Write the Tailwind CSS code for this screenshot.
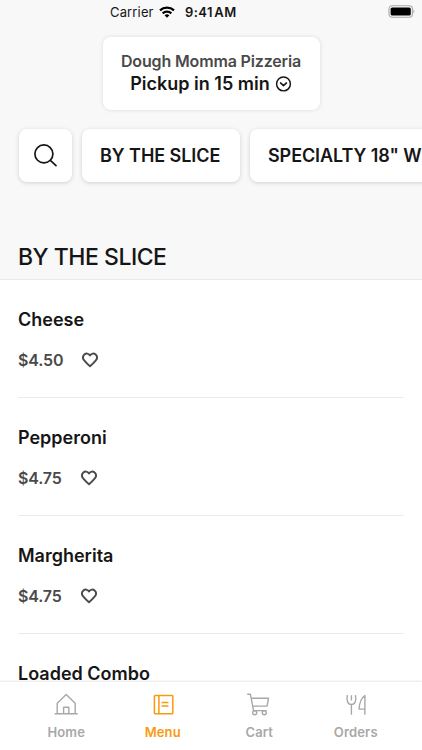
<!DOCTYPE html>
<html lang="en">
<head>
<meta charset="utf-8">
<title>Dough Momma Pizzeria</title>
<script src="https://cdn.jsdelivr.net/npm/@tailwindcss/browser@4"></script>
</head>
<body class="h-[750px] w-[422px] overflow-hidden bg-white font-['Inter',sans-serif] text-[#161616]">
<div class="flex h-[750px] flex-col overflow-hidden">
  <header class="flex h-[280px] shrink-0 flex-col border-b border-[#ebebeb] bg-[#f8f8f8]">
    <div class="flex h-[23px] items-center pr-[7px] pl-[110px] text-[13px] leading-4">
      <span class="w-[44px] whitespace-nowrap tracking-[0.15px]">Carrier</span>
      <svg class="ml-[5px] h-[12px] w-[16px]" viewBox="0 0 16 12" fill="none" stroke="#000" stroke-width="2.3"><path d="M1 4.400a10.300 10.300 0 0 1 14 0M3.700 7.300a6.300 6.300 0 0 1 8.600 0"/><path d="M8 11.700 5.600 9.300a3.500 3.500 0 0 1 4.800 0Z" fill="#000" stroke="none"/></svg>
      <span class="ml-[10px] whitespace-nowrap font-semibold tracking-[0.45px] [word-spacing:-2.5px]">9:41 AM</span>
      <svg class="ml-auto h-[13px] w-[27px]" viewBox="0 0 27 13"><rect x="1" y=".8" width="23.4" height="11.4" rx="3.2" fill="none" stroke="#a8a8a8" stroke-width="1.1"/><rect x="2.6" y="2.4" width="20.2" height="8.2" rx="1.6"/><path d="M25.4 4.6c1.5.6 1.5 3.2 0 3.8Z" fill="#b5b5b5"/></svg>
    </div>
    <div class="mx-auto mt-[14px] flex h-[73px] w-[217px] flex-col items-center rounded-[8px] bg-white pt-[13px] shadow-[0_0_4px_rgba(0,0,0,0.12)]">
      <div class="text-[16px] leading-[22px] font-semibold tracking-[-0.15px] whitespace-nowrap text-[#4a4a4a]">Dough Momma Pizzeria</div>
      <div class="mt-px flex items-center gap-[5px] text-[18px] leading-[22px] font-semibold whitespace-nowrap">
        <span>Pickup in 15 min</span>
        <svg class="h-[17px] w-[17px]" viewBox="0 0 16 16" fill="none" stroke="#161616" stroke-width="1.4" stroke-linecap="round" stroke-linejoin="round"><circle cx="8" cy="7.5" r="6.5"/><path d="M5.2 6.5 8 9.1l2.800-2.600"/></svg>
      </div>
    </div>
    <nav class="mt-[19px] flex gap-[10px] pl-[19px]">
      <div class="flex h-[53px] w-[53px] shrink-0 items-center justify-center rounded-[8px] bg-white shadow-[0_1px_4px_rgba(0,0,0,0.16)]">
        <svg class="h-[24px] w-[24px]" viewBox="0 0 24 24" fill="none" stroke="#161616" stroke-width="1.7" stroke-linecap="round"><circle cx="9.9" cy="9.9" r="9"/><path d="m16.4 16.4 5.600 5.300"/></svg>
      </div>
      <div class="flex h-[53px] w-[158px] shrink-0 items-center rounded-[8px] bg-white pl-[18px] text-[18px] font-semibold tracking-[-0.06px] whitespace-nowrap shadow-[0_1px_4px_rgba(0,0,0,0.16)]">BY THE SLICE</div>
      <div class="flex h-[53px] w-[260px] shrink-0 items-center rounded-[8px] bg-white pl-[18px] text-[18px] font-semibold tracking-[-0.09px] whitespace-nowrap shadow-[0_1px_4px_rgba(0,0,0,0.16)]">SPECIALTY 18" WHOLE</div>
    </nav>
    <h1 class="mt-auto mb-[8px] pl-[18px] text-[23px] leading-[28px] font-medium tracking-[-0.48px] whitespace-nowrap">BY THE SLICE</h1>
  </header>
  <main class="h-[402px] shrink-0 overflow-hidden px-[18px]">
    <section class="h-[118px] border-b border-[#ebebeb] pt-[29px]">
      <h2 class="text-[18px] leading-[22px] font-semibold">Cheese</h2>
      <div class="mt-[18px] flex items-center gap-[18px] text-[16px] leading-[22px] font-semibold text-[#4a4a4a]"><span class="tracking-[-0.15px]">$4.50</span><svg class="h-[16px] w-[18px]" viewBox="0 0 18 16" fill="none" stroke="#4a4a4a" stroke-width="1.9" stroke-linejoin="round"><path d="M9 3.400C7.500 1.200 5 1.100 3.400 2.500c-1.800 1.700-1.700 4.300 0 6.200C4.800 10.400 6.600 12.300 9 14.200c2.400-1.900 4.200-3.800 5.600-5.500 1.700-1.900 1.800-4.500 0-6.200C13 1.100 10.500 1.200 9 3.400Z"/></svg></div>
    </section>
    <section class="h-[118px] border-b border-[#ebebeb] pt-[29px]">
      <h2 class="text-[18px] leading-[22px] font-semibold">Pepperoni</h2>
      <div class="mt-[18px] flex items-center gap-[18px] text-[16px] leading-[22px] font-semibold text-[#4a4a4a]"><span class="tracking-[-0.15px]">$4.75</span><svg class="h-[16px] w-[18px]" viewBox="0 0 18 16" fill="none" stroke="#4a4a4a" stroke-width="1.9" stroke-linejoin="round"><path d="M9 3.400C7.500 1.200 5 1.100 3.400 2.500c-1.800 1.700-1.700 4.300 0 6.200C4.800 10.400 6.600 12.300 9 14.200c2.400-1.900 4.200-3.800 5.600-5.500 1.700-1.900 1.800-4.500 0-6.200C13 1.100 10.500 1.200 9 3.400Z"/></svg></div>
    </section>
    <section class="h-[118px] border-b border-[#ebebeb] pt-[29px]">
      <h2 class="text-[18px] leading-[22px] font-semibold">Margherita</h2>
      <div class="mt-[18px] flex items-center gap-[18px] text-[16px] leading-[22px] font-semibold text-[#4a4a4a]"><span class="tracking-[-0.15px]">$4.75</span><svg class="h-[16px] w-[18px]" viewBox="0 0 18 16" fill="none" stroke="#4a4a4a" stroke-width="1.9" stroke-linejoin="round"><path d="M9 3.400C7.500 1.200 5 1.100 3.400 2.500c-1.800 1.700-1.700 4.300 0 6.200C4.800 10.400 6.600 12.300 9 14.200c2.400-1.900 4.200-3.800 5.600-5.500 1.700-1.900 1.800-4.500 0-6.200C13 1.100 10.500 1.200 9 3.400Z"/></svg></div>
    </section>
    <section class="h-[118px] pt-[29px]">
      <h2 class="text-[18px] leading-[22px] font-semibold">Loaded Combo</h2>
    </section>
  </main>
  <footer class="z-10 grid h-[68px] shrink-0 grid-cols-4 bg-white pt-[10px] pr-[18px] pl-[18px] text-[13px] leading-[18px] font-semibold tracking-[0.15px] text-[#a8a8a8] shadow-[0_-1px_2px_rgba(0,0,0,0.1)]">
    <div class="flex flex-col items-center gap-[7px]">
      <svg class="h-[24px] w-[24px]" viewBox="0 0 24 24" fill="none" stroke="currentColor" stroke-width="1.4" stroke-linejoin="round"><path d="M.7 21.700h23M3.200 21.700V11.200l9-8.600 9 8.600v10.500M9.600 21.700v-6.400h5.200v6.400"/></svg>
      <span>Home</span>
    </div>
    <div class="flex flex-col items-center gap-[7px] text-[#f79a10]">
      <svg class="h-[24px] w-[24px]" viewBox="0 0 24 24" fill="none" stroke="currentColor" stroke-width="1.5" stroke-linejoin="round"><rect x="3.400" y="3.500" width="18.400" height="18.300" rx=".8"/><path d="M7.900 3.500v18.300M10.500 10.600h7M10.500 14h7"/></svg>
      <span>Menu</span>
    </div>
    <div class="flex flex-col items-center gap-[7px]">
      <svg class="h-[24px] w-[24px]" viewBox="0 0 24 24" fill="none" stroke="currentColor" stroke-width="1.4" stroke-linejoin="round"><path d="M.2 2.300h3.200L6.600 18.600h12.900M4.300 6.300h17.200l-1.500 7.800H5.800"/><circle cx="7.700" cy="20.800" r="2"/><circle cx="17.300" cy="20.800" r="2"/></svg>
      <span>Cart</span>
    </div>
    <div class="flex flex-col items-center gap-[7px]">
      <svg class="h-[24px] w-[24px]" viewBox="0 0 24 24" fill="none" stroke="currentColor" stroke-width="1.4" stroke-linejoin="round"><path d="M3.400 3.200c-1.100 5 .2 9.200 4 9.200s5.100-4.200 4-9.200M7.400 3.200v5.200M7.400 12.400v10.400M20.900 22.800V3.500c-3.700 2.400-5.400 7.400-5.900 13.600h5.900"/></svg>
      <span>Orders</span>
    </div>
  </footer>
</div>
</body>
</html>
